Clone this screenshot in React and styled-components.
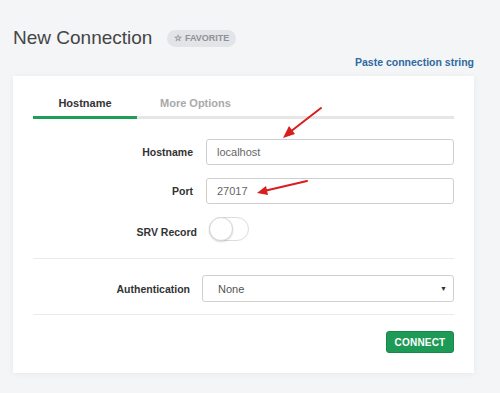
import React from "react";
import styled, { createGlobalStyle } from "styled-components";

const Global = createGlobalStyle`
  html, body { margin: 0; padding: 0; background: #f4f5f7; }
  body { font-family: "Liberation Sans", Arial, sans-serif; }
  * { box-sizing: border-box; }
`;

const Page = styled.div`
  position: relative;
  width: 500px;
  height: 393px;
  padding: 28px 26px 0 13px;
  overflow: hidden;
`;

const Header = styled.div`
  display: flex;
  align-items: center;
  gap: 15px;
  height: 20px;
`;

const Title = styled.h1`
  margin: 0;
  font-size: 19px;
  font-weight: 400;
  color: #454545;
  line-height: 20px;
`;

const Badge = styled.span`
  display: inline-flex;
  align-items: center;
  gap: 2px;
  height: 17px;
  padding: 0 7px 0 7px;
  border-radius: 9px;
  background: #e2e4e7;
  color: #8c939a;
  font-size: 9px;
  font-weight: 700;
`;

const LinkRow = styled.div`
  margin-top: 6px;
  text-align: right;
  height: 13px;
  line-height: 13px;
`;

const Link = styled.a`
  font-size: 10.5px;
  font-weight: 700;
  color: #2f6aa0;
  text-decoration: none;
`;

const Card = styled.div`
  margin-top: 9px;
  width: 461px;
  height: 297px;
  background: #fff;
  box-shadow: 0 1px 6px rgba(0, 0, 0, 0.06);
  padding: 20px;
  display: flex;
  flex-direction: column;
`;

const Tabs = styled.div`
  display: flex;
  border-bottom: 3px solid #e6e6e6;
  height: 23px;
`;

const Tab = styled.div`
  width: ${(p) => p.$w}px;
  padding-left: ${(p) => p.$pl}px;
  text-align: ${(p) => (p.$pl ? "left" : "center")};
  font-size: 11px;
  font-weight: 700;
  color: ${(p) => (p.$active ? "#333" : "#a9a9a9")};
  line-height: 14px;
  margin-bottom: -3px;
  border-bottom: 3px solid ${(p) => (p.$active ? "#1e9e57" : "transparent")};
`;

const Form = styled.div`
  display: flex;
  flex-direction: column;
  gap: 13px;
  margin-top: 20px;
`;

const Row = styled.div`
  display: grid;
  grid-template-columns: ${(p) => p.$lw}px 1fr;
  column-gap: ${(p) => p.$gap}px;
  align-items: center;
`;

const Label = styled.label`
  text-align: right;
  font-size: 10.5px;
  font-weight: 700;
  color: #333;
  padding-top: ${(p) => p.$nudge || 0}px;
`;

const Input = styled.div`
  height: 26px;
  border: 1px solid #cfcfcf;
  border-radius: 3px;
  padding-left: 10px;
  display: flex;
  align-items: center;
  font-size: 11px;
  color: #666;
  background: #fff;
`;

const Toggle = styled.div`
  position: relative;
  width: 40px;
  height: 24px;
  border: 1px solid #dcdcdc;
  border-radius: 12px;
  background: #fff;
`;

const Knob = styled.div`
  position: absolute;
  left: -1px;
  top: -1px;
  width: 24px;
  height: 24px;
  border-radius: 50%;
  background: #fff;
  border: 1px solid #d4d4d4;
  box-shadow: 0 1px 2px rgba(0, 0, 0, 0.15);
`;

const Divider = styled.hr`
  margin: ${(p) => p.$top}px 0 ${(p) => p.$bottom}px;
  border: 0;
  border-top: 1px solid #ebebeb;
  height: 0;
`;

const Select = styled.div`
  height: 27px;
  border: 1px solid #cfcfcf;
  border-radius: 3px;
  padding: 0 6px 0 15px;
  display: flex;
  align-items: center;
  justify-content: space-between;
  font-size: 11px;
  color: #555;
`;

const Caret = styled.span`
  font-size: 7px;
  color: #333;
`;

const Footer = styled.div`
  display: flex;
  justify-content: flex-end;
`;

const Button = styled.button`
  width: 68px;
  height: 22px;
  border: 1px solid #19894a;
  border-radius: 3px;
  background: #1d9a55;
  color: #fff;
  font-family: "Liberation Sans", Arial, sans-serif;
  font-size: 10px;
  font-weight: 700;
  padding: 0;
  letter-spacing: 0.2px;
`;

const Overlay = styled.svg`
  position: absolute;
  left: 0;
  top: 0;
  pointer-events: none;
`;

export default function App() {
  return (
    <>
      <Global />
      <Page>
        <Header>
          <Title>New Connection</Title>
          <Badge>☆ FAVORITE</Badge>
        </Header>
        <LinkRow>
          <Link>Paste connection string</Link>
        </LinkRow>
        <Card>
          <Tabs>
            <Tab $active $w={104}>Hostname</Tab>
            <Tab $pl={23} $w={120}>More Options</Tab>
          </Tabs>
          <Form>
            <Row $lw={160} $gap={13}>
              <Label>Hostname</Label>
              <Input>localhost</Input>
            </Row>
            <Row $lw={160} $gap={13}>
              <Label>Port</Label>
              <Input>27017</Input>
            </Row>
            <Row $lw={164} $gap={12}>
              <Label $nudge={5}>SRV Record</Label>
              <Toggle>
                <Knob />
              </Toggle>
            </Row>
          </Form>
          <Divider $top={17} $bottom={16} />
          <Row $lw={157} $gap={12}>
            <Label>Authentication</Label>
            <Select>
              None<Caret>▼</Caret>
            </Select>
          </Row>
          <Divider $top={12} $bottom={16} />
          <Footer>
            <Button>CONNECT</Button>
          </Footer>
        </Card>
        <Overlay width="500" height="393" viewBox="0 0 500 393">
          <g stroke="#d81e1e" strokeWidth="2" strokeLinecap="round" fill="none">
            <line x1="321" y1="108" x2="290" y2="132" />
            <line x1="307" y1="181" x2="264" y2="191" />
          </g>
          <g fill="#d81e1e">
            <polygon points="283,138 289,126 295,134" />
            <polygon points="257,193 266,186 268,195" />
          </g>
        </Overlay>
      </Page>
    </>
  );
}
